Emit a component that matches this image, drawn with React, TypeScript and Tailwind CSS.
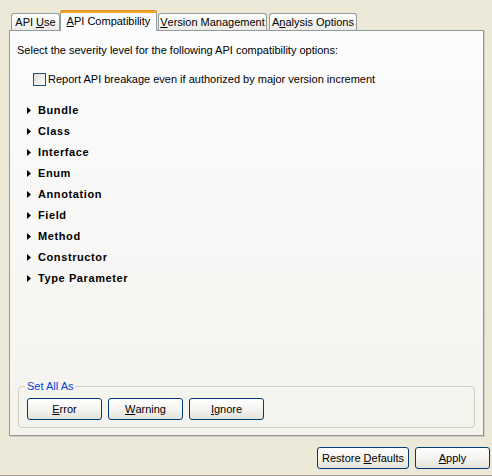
import React from "react";

const font = { fontFamily: "Tahoma, 'Liberation Sans', Arial, sans-serif" };

function Tri() {
  return (
    <svg width="4" height="7" viewBox="0 0 4 7" className="shrink-0">
      <path d="M0 0 L4 3.5 L0 7 Z" fill="#000" />
    </svg>
  );
}

function XpButton({ children, w }: { children: React.ReactNode; w: string }) {
  return (
    <button
      className={`${w} h-[22px] rounded-[3px] border border-[#003C74] bg-gradient-to-b from-[#FFFFFF] via-[#F5F4F0] to-[#E3E2DA] text-[11px] text-black leading-none flex items-center justify-center`}
    >
      {children}
    </button>
  );
}

const items = [
  "Bundle",
  "Class",
  "Interface",
  "Enum",
  "Annotation",
  "Field",
  "Method",
  "Constructor",
  "Type Parameter",
];

export default function App() {
  return (
    <div
      className="w-[492px] h-[476px] bg-[#ECE9D8] flex flex-col text-[11px] text-black overflow-hidden border-b border-[#A0A0A0]"
      style={font}
    >
      {/* tabs */}
      <div className="flex items-end h-[20px] mt-[10px] pl-[11px]">
        <div className="w-[49px] h-[17px] border border-b-0 border-[#919B9C] rounded-t-[3px] bg-gradient-to-b from-white to-[#ECEBE6] flex items-center justify-center">
          API <span className="underline ml-[3px]">U</span>se
        </div>
        <div className="relative z-10 -mb-px w-[97px] h-[21px] border border-b-0 border-[#919B9C] rounded-t-[3px] bg-[#FCFCFE] flex flex-col">
          <div className="h-[3px] -mx-px -mt-px rounded-t-[3px] bg-[#F5A623] border-t border-[#E68B2C]"></div>
          <div className="flex-1 flex items-center justify-center pb-[1px]">
            <span className="underline">A</span>PI Compatibility
          </div>
        </div>
        <div className="w-[109px] h-[17px] ml-px border border-b-0 border-[#919B9C] rounded-t-[3px] bg-gradient-to-b from-white to-[#ECEBE6] flex items-center justify-center">
          <span className="underline">V</span>ersion Management
        </div>
        <div className="w-[88px] h-[17px] ml-[2px] border border-b-0 border-[#919B9C] rounded-t-[3px] bg-gradient-to-b from-white to-[#ECEBE6] flex items-center justify-center">
          A<span className="underline">n</span>alysis Options
        </div>
      </div>

      {/* panel */}
      <div className="ml-[9px] w-[475px] h-[406px] border border-[#919B9C] border-r-[#8B9496] bg-gradient-to-b from-[#FCFCFE] to-[#F4F3EE] flex flex-col shadow-[1px_1px_0_#D0CEBF]">
        <div className="pl-[7px] pt-[13px] leading-[13px]">
          Select the severity level for the following API compatibility options:
        </div>
        <div className="flex items-center pl-[23px] mt-[16px] h-[13px]">
          <div className="w-[13px] h-[13px] border border-[#1C5180] bg-gradient-to-br from-[#DCDCD7] to-white"></div>
          <span className="ml-[2px]">Report API breakage even if authorized by major version increment</span>
        </div>
        <div className="flex flex-col pl-[17px] mt-[14px]">
          {items.map((t) => (
            <div key={t} className="h-[21px] flex items-center">
              <Tri />
              <span className="ml-[7px] font-bold tracking-[0.6px]">{t}</span>
            </div>
          ))}
        </div>
        <div className="flex-1"></div>
        <div className="relative mx-[8px] mb-[7px] h-[42px] border border-[#D0D0BF] rounded-[4px]">
          <span className="absolute -top-[7px] left-[6px] px-[2px] text-[#0046D5] bg-[#F5F4F0] leading-[13px]">
            Set All As
          </span>
          <div className="flex gap-[6px] pl-[8px] pt-[11px]">
            <XpButton w="w-[75px]">
              <span className="underline">E</span>rror
            </XpButton>
            <XpButton w="w-[75px]">
              <span className="underline">W</span>arning
            </XpButton>
            <XpButton w="w-[75px]">
              <span className="underline">I</span>gnore
            </XpButton>
          </div>
        </div>
      </div>

      {/* bottom buttons */}
      <div className="flex justify-end gap-[6px] pr-[2px] mt-[11px]">
        <XpButton w="w-[92px]">
          Restore&nbsp;<span className="underline">D</span>efaults
        </XpButton>
        <XpButton w="w-[75px]">
          <span className="underline">A</span>pply
        </XpButton>
      </div>
    </div>
  );
}
